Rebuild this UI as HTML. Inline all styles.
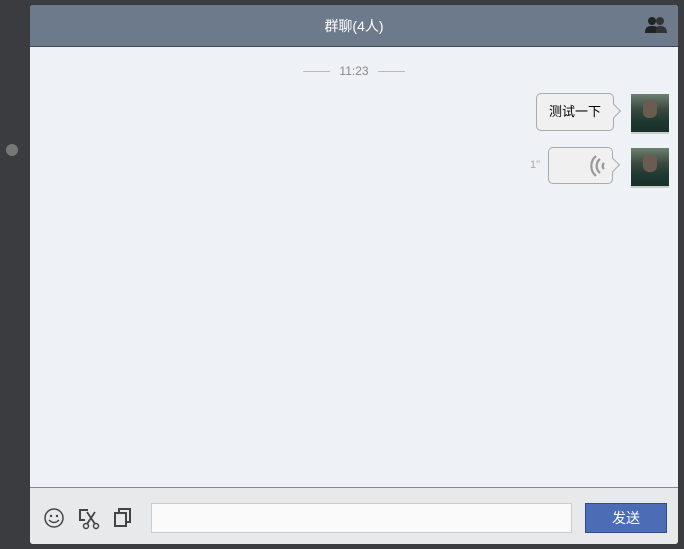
<!DOCTYPE html><html><head><meta charset="utf-8"><style>
body{margin:0;width:684px;height:549px;background:#3a3c3f;position:relative;overflow:hidden;font-family:"Liberation Sans","Noto Sans CJK SC",sans-serif}
.win{position:absolute;left:30px;top:5px;width:648px;height:539px;background:#eef1f6;border-radius:3px;overflow:hidden}
.hd{height:41px;background:#6c7a8b;border-bottom:1px solid #3e4650;color:#fff;font-size:14px;text-align:center;line-height:42px}
.time{position:absolute;top:59px;left:0;width:648px;text-align:center;font-size:12px;color:#888}
.time span{display:inline-block;width:27px;height:1px;background:#bbb;vertical-align:middle;margin:0 9px}
.av{position:absolute;left:601px;width:38px;height:38px;background:linear-gradient(180deg,#6c8070 0%,#3b4a40 40%,#1f3a33 70%,#173028 100%);border-bottom:2px solid #ccc}
.face{position:absolute;left:12px;top:6px;width:14px;height:18px;border-radius:6px;background:#6a5d50}
.b{position:absolute;background:#f0f0f0;border:1px solid #aaa;border-radius:5px;font-size:13px;color:#000}
.b:after{content:"";position:absolute;right:-6px;top:12px;width:9px;height:9px;background:#f0f0f0;border-right:1px solid #aaa;border-top:1px solid #aaa;transform:rotate(45deg)}
.ft{position:absolute;left:0;top:482px;width:648px;height:57px;background:#e8e9eb;border-top:1px solid #888}
.in{position:absolute;left:121px;top:15px;width:419px;height:28px;background:#fafafa;border:1px solid #ccc}
.btn{position:absolute;left:555px;top:15px;width:80px;height:28px;background:#4a6db5;border:1px solid #2f4d8a;color:#fff;font-size:14px;text-align:center;line-height:28px}
</style></head><body>
<div style="position:absolute;left:6px;top:144px;width:12px;height:12px;border-radius:50%;background:#777"></div>
<div class="win">
<div class="hd">群聊(4人)</div>
<svg style="position:absolute;left:614px;top:10px" width="24" height="20" viewBox="0 0 24 20"><circle cx="8" cy="6" r="4" fill="#222"/><path d="M1 18c0-6 3-7 7-7s7 1 7 7z" fill="#222"/><circle cx="16" cy="6" r="4" fill="#333"/><path d="M12 18c0-6 1-7 4-7s7 1 7 7z" fill="#333"/></svg>
<div class="time"><span></span>11:23<span></span></div>
<div class="b" style="left:506px;top:88px;width:76px;height:36px;line-height:36px;text-align:center">测试一下</div>
<div class="av" style="top:89px"><div class="face"></div></div>
<div style="position:absolute;left:500px;top:154px;font-size:11px;color:#aaa">1"</div>
<div class="b" style="left:518px;top:142px;width:63px;height:35px"><svg style="position:absolute;left:40px;top:7px" width="18" height="22" viewBox="0 0 18 22"><path d="M11 4a9 9 0 0 0 0 14M7 1a13 13 0 0 0 0 20M15 8a4 4 0 0 0 0 6" stroke="#999" stroke-width="2.2" fill="none"/></svg></div>
<div class="av" style="top:143px"><div class="face"></div></div>
<div class="ft">
<svg style="position:absolute;left:13px;top:19px" width="22" height="22" viewBox="0 0 22 22"><circle cx="11" cy="11" r="9" stroke="#444" stroke-width="1.5" fill="none"/><circle cx="8" cy="9" r="1.2" fill="#444"/><circle cx="14" cy="9" r="1.2" fill="#444"/><path d="M6 13q5 5 10 0" stroke="#444" stroke-width="1.5" fill="none"/></svg>
<svg style="position:absolute;left:48px;top:18px" width="22" height="24" viewBox="0 0 22 24"><path d="M10 4H2v10h5" stroke="#444" stroke-width="2" fill="none"/><path d="M9 6l8 12M17 6l-8 12" stroke="#444" stroke-width="1.8"/><circle cx="8" cy="20" r="2.5" stroke="#444" fill="none" stroke-width="1.5"/><circle cx="18" cy="20" r="2.5" stroke="#444" fill="none" stroke-width="1.5"/></svg>
<svg style="position:absolute;left:83px;top:19px" width="20" height="22" viewBox="0 0 20 22"><rect x="2" y="6" width="11" height="13" stroke="#444" stroke-width="2" fill="none"/><path d="M6 5V2h11v13h-3" stroke="#444" stroke-width="2" fill="none"/></svg>
<div class="in"></div>
<div class="btn">发送</div>
</div>
</div>
</body></html>
